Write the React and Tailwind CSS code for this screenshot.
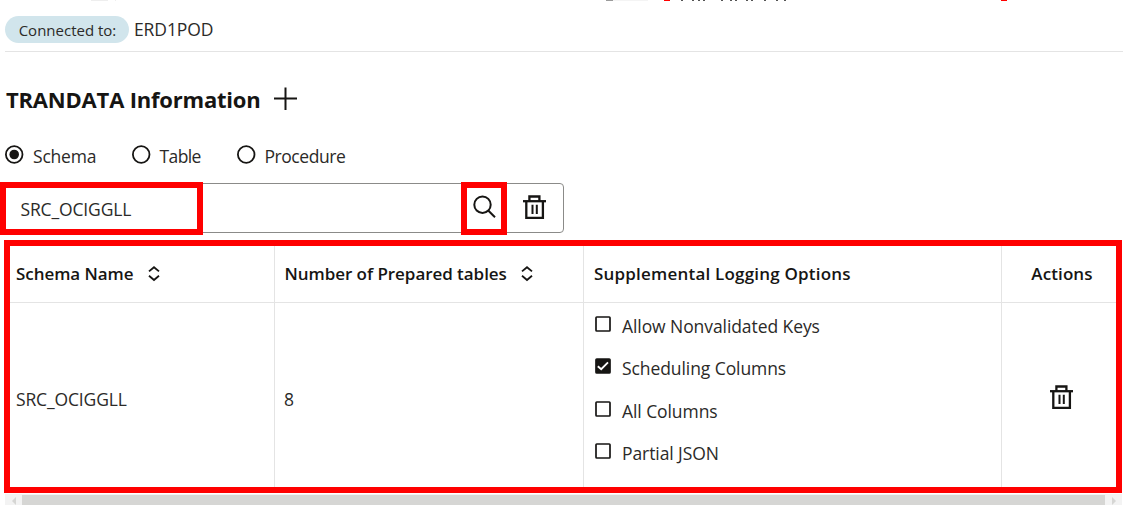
import React from "react";

function Trash() {
  return (
    <svg className="block h-6 w-6 shrink-0" viewBox="0 0 24 24" fill="none" stroke="#161513" strokeWidth="2.3">
      <path d="M6.4 6V1.5H16.4V6" />
      <path d="M0 6.2H23" />
      <path d="M3.3 6.2V22.8H19.9V6.2" />
      <path d="M9.5 9.7V19M13.8 9.7V19" strokeWidth="2" />
    </svg>
  );
}

function Sort() {
  return (
    <svg className="block h-4 w-3 shrink-0" viewBox="0 0 12 16" fill="none" stroke="#161513" strokeWidth="1.8">
      <path d="M1 5.4L6 1.2L11 5.4" />
      <path d="M1 9.8L6 14L11 9.8" />
    </svg>
  );
}

function Radio({ label, checked, className }) {
  return (
    <label className={`flex h-6 items-center gap-[9px] ${className}`}>
      <svg className="block h-5 w-5 shrink-0" viewBox="0 0 20 20">
        <circle cx="10.2" cy="9.5" r="8.3" fill="none" stroke="#161513" strokeWidth="1.8" />
        {checked && <circle cx="10.2" cy="9.5" r="4.8" fill="#161513" />}
      </svg>
      <span className="pt-0.5">{label}</span>
    </label>
  );
}

function Check({ label, checked }) {
  return (
    <label className="flex h-[42.5px] items-center gap-[11px]">
      <svg className="mb-1 block h-4 w-4 shrink-0" viewBox="0 0 16 16">
        <rect x="1" y="1" width="14" height="14" rx="0.8" fill={checked ? "#161513" : "#fff"} stroke="#161513" strokeWidth="1.7" />
        {checked && <path d="M2.8 8.2L6.2 11.2L13 4.4" fill="none" stroke="#fff" strokeWidth="1.9" />}
      </svg>
      <span className="tracking-[-0.08px]">{label}</span>
    </label>
  );
}

const glyphTops = [681, 692, 698, 703, 721, 730, 735, 746, 751, 764, 776, 784];

export default function App() {
  return (
    <div className="relative flex h-[505px] w-[1125px] flex-col overflow-hidden bg-white font-['Open_Sans',sans-serif] text-[17.5px] leading-6 text-[#2b2a28]">
      <svg className="block h-px w-full shrink-0" viewBox="0 0 1125 1" shapeRendering="crispEdges">
        <path d="M91 0h17v1h-17zM115 0h1v1h-1z" fill="#eeeeee" />
        <path d="M606 0h7v1h-7z" fill="#9b9b9b" />
        <path d="M613 0h35v1h-35z" fill="#f4f4f4" />
        <path d="M664 0h6v1h-6zM1001 0h6v1h-6z" fill="#ff0000" />
        {glyphTops.map((x) => (
          <rect key={x} x={x} y="0" width="2" height="1" fill="#555" />
        ))}
      </svg>

      <header className="ml-[5px] mr-[2px] flex h-[51px] shrink-0 items-start border-b border-[#e4e4e4] pt-[15px]">
        <span className="flex h-[27px] w-[124px] items-center justify-center rounded-full bg-[#d1e5ec] pl-px text-[15px]">
          Connected to:
        </span>
        <span className="ml-[5px] mt-px tracking-[-0.1px]">ERD1POD</span>
      </header>

      <div className="mt-[31px] flex h-8 shrink-0 items-center pl-1.5">
        <h1 className="w-[255px] whitespace-nowrap text-[22px] font-bold tracking-[-0.2px] text-[#161513]">TRANDATA Information</h1>
        <svg className="ml-3 block h-6 w-6" viewBox="0 0 24 24" fill="none" stroke="#161513" strokeWidth="2">
          <path d="M12.5 0.5V23M1 11.5H24" />
        </svg>
      </div>

      <div className="mt-[28px] flex h-6 shrink-0 items-center pl-1">
        <Radio label="Schema" checked className="w-[126.5px] tracking-[-0.2px]" />
        <Radio label="Table" className="w-[105px] tracking-[-0.6px]" />
        <Radio label="Procedure" className="tracking-[-0.45px]" />
      </div>

      <div className="ml-[5px] mt-[16px] flex h-[50px] w-[559px] shrink-0 items-center rounded-[4px] border border-[#8b8b89]">
        <span className="flex-1 pl-[14.5px] pt-0.5 tracking-[-0.15px]">SRC_OCIGGLL</span>
        <svg className="mb-0.5 mr-[27px] block h-6 w-6" viewBox="0 0 24 24" fill="none" stroke="#161513" strokeWidth="2">
          <circle cx="10.5" cy="9.7" r="8.2" />
          <path d="M16.2 15.5L23 22.3" />
        </svg>
        <span className="mb-0.5 mr-4"><Trash /></span>
      </div>

      <table className="ml-1 mt-[7px] h-[253px] w-[1118px] shrink-0 table-fixed border-separate border-spacing-0 border-[6px] border-[#ff0000] text-left">
        <colgroup>
          <col className="w-[265px]" />
          <col className="w-[309px]" />
          <col className="w-[418px]" />
          <col />
        </colgroup>
        <thead className="text-[17px] text-[#161513]">
          <tr className="h-[57px]">
            <th className="border-b border-r border-[#e4e4e4] p-0 pl-1.5 font-semibold">
              <div className="flex items-center gap-[14px]"><span className="tracking-[-0.05px]">Schema Name</span><Sort /></div>
            </th>
            <th className="border-b border-r border-[#e4e4e4] p-0 pl-[9.5px] font-semibold">
              <div className="flex items-center gap-[14px]"><span className="tracking-[-0.05px]">Number of Prepared tables</span><Sort /></div>
            </th>
            <th className="border-b border-r border-[#e4e4e4] p-0 pl-2.5 font-semibold tracking-[0.2px]">Supplemental Logging Options</th>
            <th className="border-b border-[#e4e4e4] p-0 pl-1.5 text-center font-semibold tracking-[0.1px]">Actions</th>
          </tr>
        </thead>
        <tbody>
          <tr>
            <td className="border-r border-[#e4e4e4] p-0 pl-1.5 pt-2 tracking-[-0.15px]">SRC_OCIGGLL</td>
            <td className="border-r border-[#e4e4e4] p-0 pl-[9px] pt-2">8</td>
            <td className="border-r border-[#e4e4e4] p-0 pl-[11px] align-top">
              <div className="-mb-4 flex flex-col pt-[1.5px]">
                <Check label="Allow Nonvalidated Keys" />
                <Check label="Scheduling Columns" checked />
                <Check label="All Columns" />
                <Check label="Partial JSON" />
              </div>
            </td>
            <td className="p-0 pl-1.5 pt-1"><div className="flex justify-center"><Trash /></div></td>
          </tr>
        </tbody>
      </table>

      <div className="ml-[5px] mt-px flex h-[11px] w-[1117px] shrink-0 bg-[#f3f3f3]">
        <svg className="block h-[11px] w-[17px]" viewBox="0 0 17 11"><path d="M11 3V11L7 7Z" fill="#d6d6d4" /></svg>
        <div className="mt-px flex-1 bg-[#d6d6d4]" />
        <svg className="block h-[11px] w-[17px]" viewBox="0 0 17 11"><path d="M7 3V11L11 7Z" fill="#d6d6d4" /></svg>
      </div>

      <div className="absolute left-0 top-[182px] h-[53px] w-[203px] border-[6px] border-[#ff0000]" />
      <div className="absolute left-[461px] top-[182px] h-[53px] w-[46px] border-[6px] border-[#ff0000]" />
    </div>
  );
}
